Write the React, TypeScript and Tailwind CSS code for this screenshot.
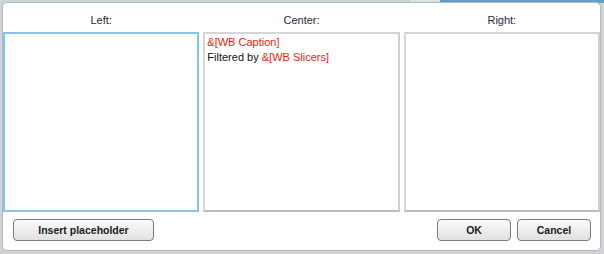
export default function App() {
  const columns = ["Left:", "Center:", "Right:"];

  return (
    <div className="relative w-[604px] h-[254px] overflow-hidden bg-[#cfd3d5] font-['Liberation_Sans',Arial,sans-serif]">
      {/* app behind the dialog */}
      <div className="flex h-[3px]">
        <div className="w-[410px] bg-[#c9d6dc]" />
        <div className="w-[30px] bg-[#d6e4ea]" />
        <div className="flex-1 bg-[#5fa2c4]" />
      </div>
      <div className="absolute left-[2px] top-[2px] w-[599px] h-[249px] rounded-[5px] border border-[#b4b8ba] bg-white flex flex-col">
        <div className="grid grid-cols-3 gap-[4px] h-[29px] text-[11px] leading-[12px] text-[#1e2a38]">
          {columns.map((c) => (
            <div key={c} className="text-center pt-[11px]">
              {c}
            </div>
          ))}
        </div>
        <div className="grid grid-cols-3 gap-[4px] h-[180px]">
          <div className="border-2 border-[#82c6f0]" />
          <div className="border-2 border-[#d6d6d6] border-b-[#bcbcbc] border-r-[#cfcfcf] px-[2px] pt-[1px] text-[11px] leading-[15px] text-[#111]">
            <div className="text-[#f2180c]">&amp;[WB Caption]</div>
            <div>
              Filtered by <span className="text-[#f2180c]">&amp;[WB Slicers]</span>
            </div>
          </div>
          <div className="border-2 border-[#d6d6d6] border-b-[#bcbcbc] border-r-[#cfcfcf]" />
        </div>
        <div className="flex items-center justify-between pt-[7px] pl-[10px] pr-[9px]">
          <Btn className="w-[141px]">Insert placeholder</Btn>
          <div className="flex gap-[6px]">
            <Btn className="w-[74px]">OK</Btn>
            <Btn className="w-[74px]">Cancel</Btn>
          </div>
        </div>
      </div>
    </div>
  );
}

function Btn({ children, className }: { children: React.ReactNode; className: string }) {
  return (
    <button
      className={`${className} h-[22px] rounded-[4px] border border-[#7a7a7a] bg-gradient-to-b from-[#fbfbfb] to-[#e1e1e1] text-[10.5px] font-bold text-[#1b1b1b] leading-none`}
    >
      {children}
    </button>
  );
}
